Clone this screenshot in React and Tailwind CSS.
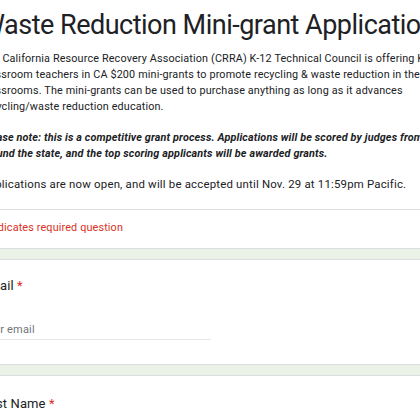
import React from "react";

const Card = ({ children, className = "" }) => (
  <div className={`bg-white border border-[#dadce0] rounded-lg ${className}`}>{children}</div>
);

const Question = ({ label }) => (
  <div className="text-[13px] leading-[20px] text-[#202124] tracking-[0.1px]">
    {label} <span className="text-[#d93025]">*</span>
  </div>
);

export default function App() {
  return (
    <div
      className="w-[420px] h-[420px] overflow-hidden bg-[#ebf3e9]"
      style={{ fontFamily: "Roboto, 'Noto Sans', sans-serif" }}
    >
      <div className="ml-[-39px] mt-[-9px] w-[540px] flex flex-col gap-[10px]">
        {/* Header card */}
        <Card>
          <div className="pl-[19px] pt-[17px] pb-[17px]">
            <h1 className="text-[27px] leading-[32px] text-[#202124] whitespace-nowrap tracking-[-0.5px]">
              Waste Reduction Mini-grant Application
            </h1>
            <div className="mt-[10px] text-[#202124] whitespace-nowrap">
              <p className="text-[10.8px] leading-[16px] tracking-[0.15px]">
                The California Resource Recovery Association (CRRA) K-12 Technical Council is offering K-12
                <br />
                classroom teachers in CA $200 mini-grants to promote recycling &amp; waste reduction in their
                <br />
                classrooms. The mini-grants can be used to purchase anything as long as it advances
                <br />
                recycling/waste reduction education.
              </p>
              <p className="mt-[15px] text-[10.8px] leading-[16px] tracking-[0.15px] italic font-bold">
                Please note: this is a competitive grant process. Applications will be scored by judges from
                <br />
                around the state, and the top scoring applicants will be awarded grants.
              </p>
              <p className="mt-[14px] text-[11.4px] leading-[16px] tracking-[0.2px]">
                Applications are now open, and will be accepted until Nov. 29 at 11:59pm Pacific.
              </p>
            </div>
          </div>
          <div className="border-t border-[#dadce0] pl-[19px] pt-[10px] pb-[12px] text-[10.8px] leading-[16px] text-[#d93025] tracking-[0.15px]">
            * Indicates required question
          </div>
        </Card>

        {/* Email */}
        <Card className="pl-[19px] pt-[16px] pb-[24px]">
          <Question label="Email" />
          <div className="mt-[26px] w-[230px] border-b border-[#e6e7e9] pb-[1px] text-[11px] leading-[16px] text-[#70757a] tracking-[0.2px]">
            Your email
          </div>
        </Card>

        {/* First Name */}
        <Card className="pl-[19px] pt-[18px] pb-[25px]">
          <Question label="First Name" />
          <div className="mt-[24px] w-[230px] border-b border-[#e6e7e9] pb-[2px] text-[11px] leading-[16px] text-[#70757a]">
            Your answer
          </div>
        </Card>
      </div>
    </div>
  );
}
